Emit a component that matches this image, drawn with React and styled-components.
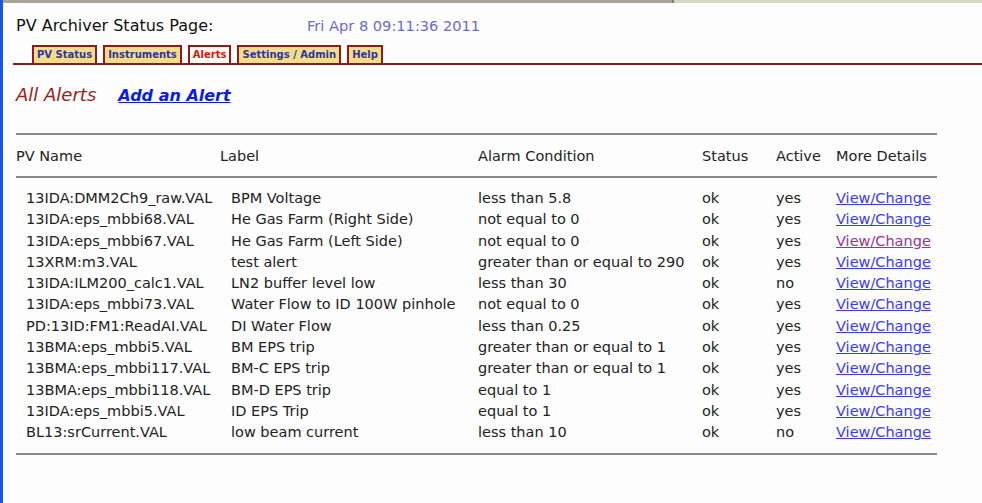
import React from "react";
import styled, { createGlobalStyle } from "styled-components";

const GlobalStyle = createGlobalStyle`
  html, body {
    margin: 0;
    padding: 0;
    background: #fdfdfd;
  }
  body {
    font-family: "DejaVu Sans", Verdana, sans-serif;
    color: #222;
  }
`;

const tabs = ["PV Status", "Instruments", "Alerts", "Settings / Admin", "Help"];

const alerts = [
  ["13IDA:DMM2Ch9_raw.VAL", "BPM Voltage", "less than 5.8", "ok", "yes"],
  ["13IDA:eps_mbbi68.VAL", "He Gas Farm (Right Side)", "not equal to 0", "ok", "yes"],
  ["13IDA:eps_mbbi67.VAL", "He Gas Farm (Left Side)", "not equal to 0", "ok", "yes", true],
  ["13XRM:m3.VAL", "test alert", "greater than or equal to 290", "ok", "yes"],
  ["13IDA:ILM200_calc1.VAL", "LN2 buffer level low", "less than 30", "ok", "no"],
  ["13IDA:eps_mbbi73.VAL", "Water Flow to ID 100W pinhole", "not equal to 0", "ok", "yes"],
  ["PD:13ID:FM1:ReadAI.VAL", "DI Water Flow", "less than 0.25", "ok", "yes"],
  ["13BMA:eps_mbbi5.VAL", "BM EPS trip", "greater than or equal to 1", "ok", "yes"],
  ["13BMA:eps_mbbi117.VAL", "BM-C EPS trip", "greater than or equal to 1", "ok", "yes"],
  ["13BMA:eps_mbbi118.VAL", "BM-D EPS trip", "equal to 1", "ok", "yes"],
  ["13IDA:eps_mbbi5.VAL", "ID EPS Trip", "equal to 1", "ok", "yes"],
  ["BL13:srCurrent.VAL", "low beam current", "less than 10", "ok", "no"],
];

const App = () => {
  return (
    <>
      <GlobalStyle />
      <Window>
        <TopBar>
          <BarDark />
          <BarLight />
        </TopBar>
        <Page>
          <Header>
            <Title>PV Archiver Status Page:</Title>
            <DateText>Fri Apr 8 09:11:36 2011</DateText>
          </Header>
          <TabRow>
            {tabs.map((t) => (
              <Tab key={t} active={t === "Alerts"}>
                {t}
              </Tab>
            ))}
          </TabRow>
          <SubNav>
            <Current>All Alerts</Current>
            <AddLink href="#">Add an Alert</AddLink>
          </SubNav>
          <Table>
            <Rule />
            <HeadRow>
              <span>PV Name</span>
              <span>Label</span>
              <span>Alarm Condition</span>
              <span>Status</span>
              <span>Active</span>
              <span>More Details</span>
            </HeadRow>
            <Rule />
            <Body>
              {alerts.map((a, i) => (
                <Row key={i}>
                  <Cell indent={10}>{a[0]}</Cell>
                  <Cell indent={11}>{a[1]}</Cell>
                  <Cell>{a[2]}</Cell>
                  <Cell>{a[3]}</Cell>
                  <Cell>{a[4]}</Cell>
                  <Cell>
                    <DetailLink href="#" visited={a[5]}>
                      View/Change
                    </DetailLink>
                  </Cell>
                </Row>
              ))}
            </Body>
            <Rule />
          </Table>
        </Page>
      </Window>
    </>
  );
};

const Window = styled.div`
  min-height: 503px;
  border-left: 3px solid #1c55e6;
  box-sizing: border-box;
`;

const TopBar = styled.div`
  display: flex;
  height: 3px;
`;

const BarDark = styled.div`
  width: 669px;
  background: #aaa697;
  border-right: 2px solid #7f7c72;
`;

const BarLight = styled.div`
  flex: 1;
  background: #d8d4c4;
`;

const Page = styled.div`
  padding: 13px 0 0 10px;
`;

const Header = styled.div`
  display: flex;
  align-items: baseline;
  padding-left: 3px;
  line-height: 19px;
`;

const Title = styled.div`
  font-size: 16px;
  color: #111;
  width: 291px;
`;

const DateText = styled.div`
  font-size: 14.6px;
  color: #6b6bc8;
`;

const TabRow = styled.div`
  display: flex;
  gap: 6px;
  margin-top: 10px;
  padding-left: 19px;
  border-bottom: 2px solid #8e1b1b;
`;

const Tab = styled.div`
  height: 16px;
  line-height: 16px;
  padding: 0 3px;
  border: 2px solid #8e1b1b;
  border-bottom: none;
  background: ${(p) => (p.active ? "#fffdf2" : "#efdd8c")};
  color: ${(p) => (p.active ? "#dd1111" : "#333399")};
  font-size: 10px;
  font-weight: bold;
`;

const SubNav = styled.div`
  display: flex;
  align-items: baseline;
  gap: 22px;
  margin-top: 19px;
  padding-left: 3px;
  line-height: 21px;
`;

const Current = styled.span`
  font-size: 18px;
  font-style: italic;
  color: #9b2020;
`;

const AddLink = styled.a`
  font-size: 16px;
  font-weight: bold;
  font-style: italic;
  color: #0a1af0;
  text-decoration: underline;
`;

const Table = styled.div`
  width: 921px;
  margin: 27px 0 0 3px;
`;

const Rule = styled.div`
  height: 2px;
  background: #888;
`;

const cols = "204px 258px 224px 74px 60px 101px";

const HeadRow = styled.div`
  display: grid;
  grid-template-columns: ${cols};
  height: 41px;
  align-items: center;
  font-size: 14.5px;
  color: #222;
`;

const Body = styled.div`
  padding: 10px 0 9px;
`;

const Row = styled.div`
  display: grid;
  grid-template-columns: ${cols};
  height: 21.3px;
  line-height: 21.3px;
  font-size: 14.5px;
  color: #222;
`;

const Cell = styled.span`
  padding-left: ${(p) => p.indent || 0}px;
  white-space: nowrap;
`;

const DetailLink = styled.a`
  color: ${(p) => (p.visited ? "#993399" : "#3a3aff")};
  text-decoration: underline;
`;

export default App;
